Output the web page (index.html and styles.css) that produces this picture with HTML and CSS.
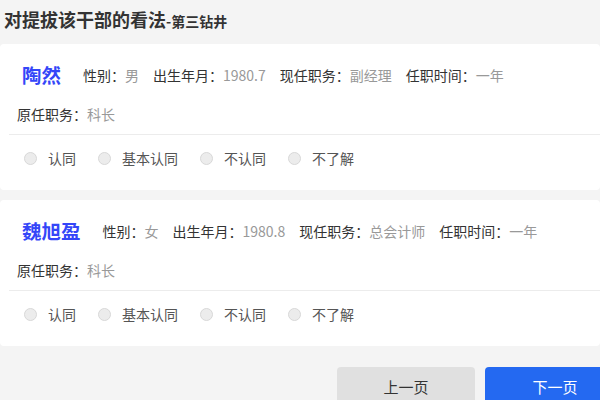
FILE: index.html
```html
<!DOCTYPE html>
<html lang="zh">
<head>
<meta charset="utf-8">
<link rel="stylesheet" href="styles.css">
</head>
<body>
<div class="page">
  <div class="header">
    <span class="title">对提拔该干部的看法</span><span class="subtitle">-第三钻井</span>
  </div>

  <div class="card">
    <div class="info">
      <div class="main">
        <span class="name">陶然</span>
        <span class="item"><span class="label">性别：</span><span class="value">男</span></span>
        <span class="item"><span class="label">出生年月：</span><span class="value">1980.7</span></span>
        <span class="item"><span class="label">现任职务：</span><span class="value">副经理</span></span>
        <span class="item"><span class="label">任职时间：</span><span class="value">一年</span></span>
      </div>
      <div class="sub">
        <span class="item"><span class="label">原任职务：</span><span class="value">科长</span></span>
      </div>
    </div>
    <div class="choices">
      <label class="choice"><span class="radio"></span><span>认同</span></label>
      <label class="choice"><span class="radio"></span><span>基本认同</span></label>
      <label class="choice"><span class="radio"></span><span>不认同</span></label>
      <label class="choice"><span class="radio"></span><span>不了解</span></label>
    </div>
  </div>

  <div class="card">
    <div class="info">
      <div class="main">
        <span class="name">魏旭盈</span>
        <span class="item"><span class="label">性别：</span><span class="value">女</span></span>
        <span class="item"><span class="label">出生年月：</span><span class="value">1980.8</span></span>
        <span class="item"><span class="label">现任职务：</span><span class="value">总会计师</span></span>
        <span class="item"><span class="label">任职时间：</span><span class="value">一年</span></span>
      </div>
      <div class="sub">
        <span class="item"><span class="label">原任职务：</span><span class="value">科长</span></span>
      </div>
    </div>
    <div class="choices">
      <label class="choice"><span class="radio"></span><span>认同</span></label>
      <label class="choice"><span class="radio"></span><span>基本认同</span></label>
      <label class="choice"><span class="radio"></span><span>不认同</span></label>
      <label class="choice"><span class="radio"></span><span>不了解</span></label>
    </div>
  </div>

  <div class="footer">
    <button class="btn btn-prev">上一页</button>
    <button class="btn btn-next">下一页</button>
  </div>
</div>
</body>
</html>
```

FILE: styles.css
```css
html, body {
  margin: 0;
  padding: 0;
  background: #f4f4f4;
  overflow: hidden;
}
body {
  font-family: "Noto Sans CJK SC", "Microsoft YaHei", sans-serif;
  color: #333;
  width: 600px;
  height: 400px;
}
.page {
  width: 600px;
}
.header {
  height: 44px;
  box-sizing: border-box;
  padding: 8px 0 0 4px;
  line-height: 22px;
  white-space: nowrap;
}
.title {
  font-size: 18px;
  font-weight: bold;
  color: #333;
}
.subtitle {
  font-size: 14px;
  font-weight: bold;
  color: #333;
}
.card {
  background: #fff;
  border-radius: 4px;
  margin-bottom: 10px;
}
.info {
  padding: 10px 0 9px 17px;
}
.main {
  display: flex;
  align-items: center;
  height: 42px;
  white-space: nowrap;
}
.name {
  font-size: 19.5px;
  font-weight: bold;
  color: #3446f8;
  margin: 0 22px 0 5px;
  line-height: 42px;
}
.item {
  font-size: 14px;
  line-height: 22px;
  margin-right: 14px;
  white-space: nowrap;
}
.label {
  color: #333;
}
.value {
  color: #999;
}
.sub {
  margin-top: 7px;
  line-height: 22px;
  display: flex;
}
.choices {
  margin-left: 9px;
  border-top: 1px solid #ececec;
  padding: 13px 0 22px 15px;
  display: flex;
  align-items: center;
  height: 20px;
}
.choice {
  display: flex;
  align-items: center;
  font-size: 14px;
  line-height: 20px;
  color: #555;
  margin-right: 22px;
}
.radio {
  width: 13px;
  height: 13px;
  box-sizing: border-box;
  border: 1px solid #d8d8d8;
  background: #ececec;
  border-radius: 50%;
  margin-right: 11px;
}
.footer {
  display: flex;
  padding: 11px 0 0 337px;
  gap: 10px;
}
.btn {
  flex: none;
  width: 138px;
  height: 40px;
  border: none;
  border-radius: 4px;
  font-family: "Noto Sans CJK SC", "Microsoft YaHei", sans-serif;
  font-size: 15px;
  line-height: 40px;
  padding: 0;
}
.btn-prev {
  background: #e0e0e0;
  color: #333;
}
.btn-next {
  background: #2469f1;
  color: #fff;
  width: 140px;
}
```
